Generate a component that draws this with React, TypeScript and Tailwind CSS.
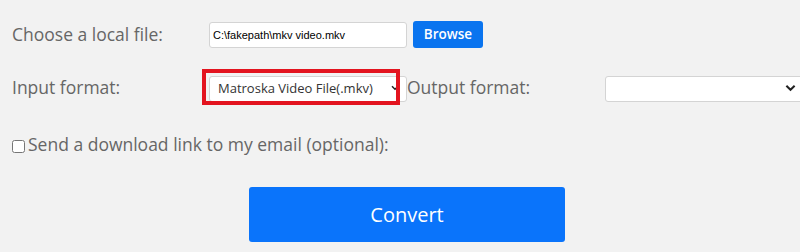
import { useState } from "react";

const Chevron = ({ className }: { className?: string }) => (
  <svg viewBox="0 0 12 8" className={className} fill="none" stroke="currentColor" strokeWidth={2.2}>
    <path d="M1.5 1.5 6 6l4.5-4.5" />
  </svg>
);

const App = () => {
  const [input, setInput] = useState("mkv");
  const [output, setOutput] = useState("");
  const [sendLink, setSendLink] = useState(false);

  return (
    <div className="w-[800px] h-[252px] overflow-hidden bg-[#f2f2f2] pl-3 pt-[21px] text-[#666] font-['Open_Sans',sans-serif]">
      <div className="flex items-center h-[27px]">
        <label className="w-[197px] shrink-0 text-[17.5px] leading-none">Choose a local file:</label>
        <input
          type="text"
          readOnly
          value="C:\fakepath\mkv video.mkv"
          className="w-[198px] h-[26px] shrink-0 bg-white border border-[#d4d4d4] rounded-[3px] px-[3px] text-[11px] text-black font-['Liberation_Sans',Arial,sans-serif]"
        />
        <button className="ml-[6px] w-[70px] h-[27px] shrink-0 rounded-[3px] bg-[#0a74ef] text-white text-[13.5px] font-semibold">
          Browse
        </button>
      </div>

      <div className="flex items-center h-[26px] mt-[27px]">
        <label className="w-[197px] shrink-0 text-[17.5px] leading-none">Input format:</label>
        <div className="relative w-[198px] h-[26px] shrink-0">
          <select
            value={input}
            onChange={(e) => setInput(e.target.value)}
            className="appearance-none w-full h-full bg-white border border-[#d4d4d4] rounded-[3px] pl-[8px] text-[13px] text-[#333]"
          >
            <option value="mkv">Matroska Video File(.mkv)</option>
          </select>
          <Chevron className="absolute right-[8px] top-[10px] w-[8px] h-[6px] text-[#222] pointer-events-none" />
          {/* annotation box from the screenshot */}
          <div className="absolute left-[-7px] top-[-6px] w-[198px] h-[36px] border-[4px] border-[#e3141f] pointer-events-none" />
        </div>
        <label className="w-[198px] shrink-0 text-[17.5px] leading-none">Output format:</label>
        <div className="relative w-[198px] h-[26px] shrink-0">
          <select
            value={output}
            onChange={(e) => setOutput(e.target.value)}
            className="appearance-none w-full h-full bg-white border border-[#d4d4d4] rounded-[3px] pl-[8px] text-[13px] text-[#333]"
          >
            <option value=""></option>
          </select>
          <Chevron className="absolute right-[7px] top-[9px] w-[11px] h-[8px] text-[#222] pointer-events-none" />
        </div>
      </div>

      <label className="flex items-center mt-[32px] h-[24px] text-[17.5px] leading-none">
        <input
          type="checkbox"
          checked={sendLink}
          onChange={(e) => setSendLink(e.target.checked)}
          className="w-[13px] h-[13px] m-0 mt-[2px]"
        />
        <span className="ml-[3px]">Send a download link to my email (optional):</span>
      </label>

      <button className="block ml-[237px] mt-[30px] w-[316px] h-[55px] rounded-[3px] bg-[#0a74fb] text-white text-[20px]">
        Convert
      </button>
    </div>
  );
};

export default App;
